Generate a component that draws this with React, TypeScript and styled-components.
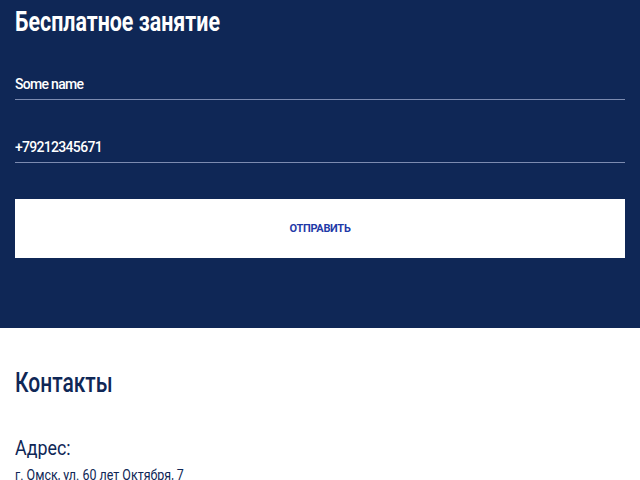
import styled, { createGlobalStyle } from "styled-components";

const Global = createGlobalStyle`
    html, body {
        margin: 0;
        padding: 0;
        background: #ffffff;
    }
    * { box-sizing: border-box; }
`;

// no condensed face installed, so squeeze Roboto horizontally
const Squeeze = styled.span<{ $scale: number }>`
    display: inline-block;
    white-space: nowrap;
    transform: scaleX(${(p) => p.$scale});
    transform-origin: left center;
`;

const FormSection = styled.section`
    background-color: #0f2756;
    padding: 6px 15px 70px;
    height: 328px;
`;

const Title = styled.h2<{ $dark?: boolean }>`
    margin: 0;
    font-family: "Roboto", sans-serif;
    font-weight: ${(p) => (p.$dark ? 500 : 700)};
    font-size: 28px;
    line-height: 32px;
    color: ${(p) => (p.$dark ? "#0f2756" : "#ffffff")};
`;

const Form = styled.form`
    display: flex;
    flex-direction: column;
    margin-top: 35px;
`;

const Field = styled.input`
    display: block;
    width: 100%;
    height: 27px;
    padding: 0 0 5px;
    margin-bottom: 36px;
    background: transparent;
    border: none;
    border-bottom: 1px solid #7c8bb0;
    outline: none;
    color: #ffffff;
    font-family: "Roboto", sans-serif;
    font-weight: 500;
    font-size: 14px;
    letter-spacing: -0.7px;
`;

const Submit = styled.button`
    height: 59px;
    border: none;
    background: #ffffff;
    color: #1f3aa8;
    font-family: "Roboto", sans-serif;
    font-weight: 700;
    font-size: 11px;
    letter-spacing: -0.3px;
    text-transform: uppercase;
    cursor: pointer;
`;

const Contacts = styled.section`
    padding: 39px 15px 0;
`;

const Label = styled.h3`
    margin: 37px 0 0;
    font-family: "Roboto", sans-serif;
    font-weight: 400;
    font-size: 21px;
    line-height: 24px;
    color: #0f2756;
`;

const Address = styled.p`
    margin: 6px 0 0;
    font-family: "Roboto", sans-serif;
    font-size: 14px;
    line-height: 18px;
    color: #0f2756;
`;

export default function App() {
    return (
        <>
            <Global />
            <FormSection>
                <Title><Squeeze $scale={0.765}>Бесплатное занятие</Squeeze></Title>
                <Form onSubmit={(e) => e.preventDefault()}>
                    <Field defaultValue="Some name" />
                    <Field defaultValue="+79212345671" />
                    <Submit type="submit">Отправить</Submit>
                </Form>
            </FormSection>
            <Contacts>
                <Title $dark><Squeeze $scale={0.75}>Контакты</Squeeze></Title>
                <Label><Squeeze $scale={0.85}>Адрес:</Squeeze></Label>
                <Address><Squeeze $scale={0.89}>г. Омск, ул. 60 лет Октября, 7</Squeeze></Address>
            </Contacts>
        </>
    );
}
